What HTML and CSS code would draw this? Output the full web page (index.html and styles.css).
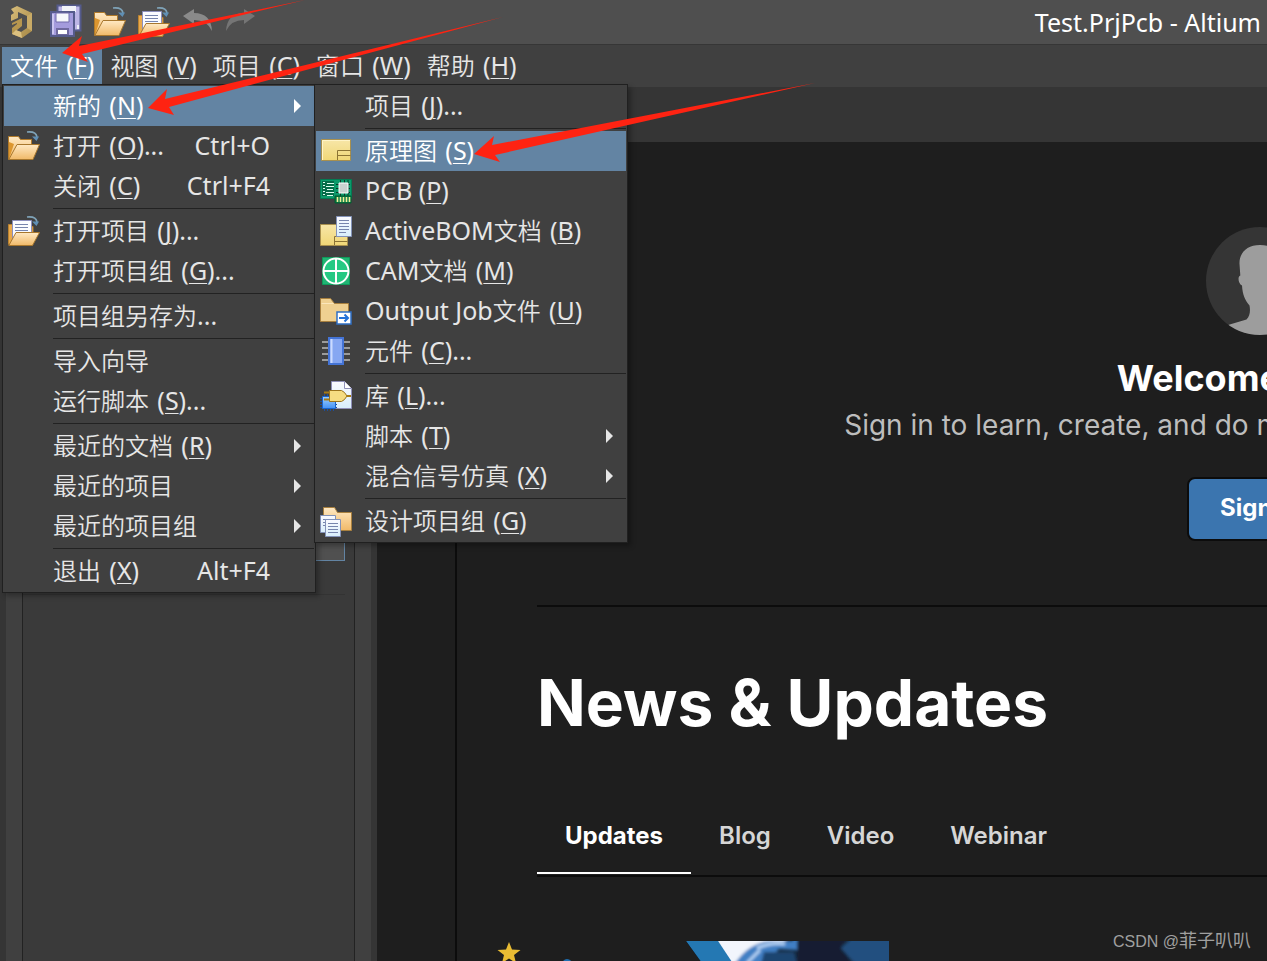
FILE: index.html
```html
<!DOCTYPE html>
<html lang="zh-CN">
<head>
<meta charset="utf-8">
<title>Test.PrjPcb - Altium</title>
<link rel="stylesheet" href="styles.css">
</head>
<body>
<svg class="defs" aria-hidden="true">
  <defs>
    <linearGradient id="tan" x1="0" y1="0" x2="0" y2="1"><stop offset="0" stop-color="#ffe9c4"/><stop offset="1" stop-color="#f0b968"/></linearGradient>
    <linearGradient id="yellow" x1="0" y1="0" x2="0" y2="1"><stop offset="0" stop-color="#f7e6a8"/><stop offset="1" stop-color="#f0d776"/></linearGradient>
    <linearGradient id="paper" x1="0" y1="0" x2="0" y2="1"><stop offset="0" stop-color="#fafaff"/><stop offset="1" stop-color="#d8eefb"/></linearGradient>
    <linearGradient id="gold" x1="0" y1="0" x2="1" y2="1"><stop offset="0" stop-color="#d8bd7a"/><stop offset="1" stop-color="#a58745"/></linearGradient>
    <linearGradient id="chip" x1="0" y1="0" x2="0" y2="1"><stop offset="0" stop-color="#9ed0ff"/><stop offset="1" stop-color="#4592f5"/></linearGradient>
    <symbol id="swoosh" viewBox="0 0 32 32">
      <path d="M19 2q9-1 10 5" fill="none" stroke="#7fa3b8" stroke-width="1.6"/>
      <path d="M24 6.500h7l-2.500 4.500z" fill="#5f8fb5"/>
    </symbol>
    <symbol id="folder-open" viewBox="0 0 32 32">
      <path d="M.500 29.500v-23h10l2 3h11v6" fill="url(#tan)" stroke="#b07a2a"/>
      <path d="M1 29V12l5 2z" fill="#dc962f"/>
      <path d="M.800 29.500 9 14.500h22.500L25 29.500z" fill="url(#tan)" stroke="#a8772d"/>
      <use href="#swoosh"/>
    </symbol>
    <symbol id="folder-doc" viewBox="0 0 32 32">
      <path d="M.500 29.500V9.500h6v6h17v-4h1.500v6" fill="#e9a94c" stroke="#b98230"/>
      <path d="M4.500 25V5.500h19V22z" fill="#fbfcff" stroke="#8d90bd"/>
      <path d="M7 9.500h13M7 12.500h13M7 15.500h13" stroke="#7785ad"/>
      <path d="M.800 30.500 8 17.500h23.500l-7 13z" fill="url(#tan)" stroke="#a8772d"/>
      <use href="#swoosh"/>
    </symbol>
  </defs>
</svg>

<header class="titlebar">
  <nav class="toolbar" aria-label="工具栏">
    <button class="tool" aria-label="Altium"><svg viewBox="0 0 32 32"><path d="M5 3 11 0l15 7v18l-10 7-10-4v-5l9 3 6-4V10l-9-4v6l-7 3V9l3-2z" fill="url(#gold)"/><path d="M6 17l10-5v8l-10 8v-6l5-4v-1l-5 2z" fill="#b6964f"/><path d="M21 10l5-3v18l-5-3z" fill="#c9ab66"/><path d="M6 28l4-4 5 2 1 6z" fill="#dcc180"/></svg></button>
    <button class="tool" aria-label="全部保存"><svg viewBox="0 0 32 32"><path d="M7.500-.500h23v25h-23z" fill="#bdb6e6" stroke="#555b8c" stroke-width="2"/><path d="M12 0h14v6H12z" fill="#f1f3f8"/><path d="M27 19h2v4h-2z" fill="#eceef7"/><path d="M1 6h23v24H1z" fill="#a49bdd" stroke="#555b8c" stroke-width="2"/><path d="M6 7h13v9H6z" fill="#f6f7fb" stroke="#716aab"/><path d="M3 8v20" stroke="#cbc5f0" stroke-width="2"/><path d="M6 22h13v7H6z" fill="#6f699f"/><path d="M8 24h9v4H8z" fill="#fff"/></svg></button>
    <button class="tool" aria-label="打开"><svg viewBox="0 0 32 32"><use href="#folder-open"/></svg></button>
    <button class="tool" aria-label="打开项目"><svg viewBox="0 0 32 32"><use href="#folder-doc"/></svg></button>
    <button class="tool" aria-label="撤销"><svg viewBox="0 0 32 32"><path d="M1 10 12 3v4q17 0 18 18-5-11-18-11v4z" fill="#8a8a8a"/></svg></button>
    <button class="tool" aria-label="重做"><svg viewBox="0 0 32 32"><path d="M29 10 18 3v4Q1 7 0 25q5-11 18-11v4z" fill="#757575"/></svg></button>
  </nav>
  <span class="window-title">Test.PrjPcb - Altium</span>
</header>

<nav class="menubar" aria-label="菜单">
  <button class="menu-head is-open">文件 <span class="lat key">(<u>F</u>)</span></button>
  <button class="menu-head">视图 <span class="lat key">(<u>V</u>)</span></button>
  <button class="menu-head">项目 <span class="lat key">(<u>C</u>)</span></button>
  <button class="menu-head">窗口 <span class="lat key">(<u>W</u>)</span></button>
  <button class="menu-head">帮助 <span class="lat key">(<u>H</u>)</span></button>

  <div class="menu menu-file">
    <button class="item is-active"><span class="icon"></span><span>新的 <span class="lat key">(<u>N</u>)</span></span><i class="more"></i></button>
    <button class="item"><svg class="icon" viewBox="0 0 32 32"><use href="#folder-open"/></svg><span>打开 <span class="lat key">(<u>O</u>)...</span></span><span class="lat shortcut">Ctrl+O</span></button>
    <button class="item"><span class="icon"></span><span>关闭 <span class="lat key">(<u>C</u>)</span></span><span class="lat shortcut">Ctrl+F4</span></button>
    <hr class="sep">
    <button class="item"><svg class="icon" viewBox="0 0 32 32"><use href="#folder-doc"/></svg><span>打开项目 <span class="lat key">(<u>J</u>)...</span></span></button>
    <button class="item"><span class="icon"></span><span>打开项目组 <span class="lat key">(<u>G</u>)...</span></span></button>
    <hr class="sep">
    <button class="item"><span class="icon"></span><span>项目组另存为<span class="lat">...</span></span></button>
    <hr class="sep">
    <button class="item"><span class="icon"></span><span>导入向导</span></button>
    <button class="item"><span class="icon"></span><span>运行脚本 <span class="lat key">(<u>S</u>)...</span></span></button>
    <hr class="sep">
    <button class="item"><span class="icon"></span><span>最近的文档 <span class="lat key">(<u>R</u>)</span></span><i class="more"></i></button>
    <button class="item"><span class="icon"></span><span>最近的项目</span><i class="more"></i></button>
    <button class="item"><span class="icon"></span><span>最近的项目组</span><i class="more"></i></button>
    <hr class="sep">
    <button class="item"><span class="icon"></span><span>退出 <span class="lat key">(<u>X</u>)</span></span><span class="lat shortcut">Alt+F4</span></button>
  </div>

  <div class="menu menu-new">
    <button class="item"><span class="icon"></span><span>项目 <span class="lat key">(<u>J</u>)...</span></span></button>
    <hr class="sep">
    <button class="item is-active"><svg class="icon" viewBox="0 0 32 32"><path d="M1.500 4.500h29v21h-29z" fill="url(#yellow)" stroke="#a8904e"/><path d="M2.500 25V5.500H30" fill="none" stroke="#fff4c8"/><path d="M17.500 25v-9.500h13M17.500 20.500h13" fill="none" stroke="#8c7434"/></svg><span>原理图 <span class="lat key">(<u>S</u>)</span></span></button>
    <button class="item"><svg class="icon" viewBox="0 0 32 32"><path d="M.500 4.500h31v19h-31z" fill="#0b9a6b" stroke="#047a52"/><path d="M2 6h12v15H2z" fill="#056b49"/><path d="M3 7.500h2M3 10.500h2M3 13.500h2M3 16.500h2M3 19.500h2M7 8.500h7M6 11.500h8M7 14.500h6M6 17.500h8M7 20.500h6" stroke="#d9fff0"/><path d="M16 9.500h14M16 13.500h14M16 17.500h14M20.500 5v17M24.500 5v17M28 5v17" stroke="#0a3829"/><path d="M19 8h9v10h-9z" fill="#c9d2d0" stroke="#fff"/><path d="M15 21h16v7H15z" fill="#057a42" stroke="#025b30"/><path d="M17.500 22v5M20.500 22v5M23.500 22v5M26.500 22v5M29.500 22v5" stroke="#f0ef9a" stroke-width="1.600"/></svg><span class="lat">PCB (<u>P</u>)</span></button>
    <button class="item"><svg class="icon" viewBox="0 0 32 32"><path d="M.500 9.500h27v21H.500z" fill="url(#yellow)" stroke="#a8904e"/><path d="M14.500 30v-8.500h13M14.500 26.500h13" fill="none" stroke="#8c7434"/><path d="M16.500 1.500h15v20h-15z" fill="url(#paper)" stroke="#8392b8"/><path d="M19 5.500h10M19 8.500h10M19 11.500h10M19 14.500h10M19 17.500h7" stroke="#7785ad"/></svg><span><span class="lat">ActiveBOM</span>文档 <span class="lat key">(<u>B</u>)</span></span></button>
    <button class="item"><svg class="icon" viewBox="0 0 32 32"><path d="M2.500 2.500h27v27h-27z" fill="#1fb573" stroke="#0f9a5b"/><circle cx="16" cy="16" r="12.500" fill="#25c983" stroke="#fff" stroke-width="2"/><path d="M16 3v26M3 16h26" stroke="#fff" stroke-width="2"/></svg><span><span class="lat">CAM</span>文档 <span class="lat key">(<u>M</u>)</span></span></button>
    <button class="item"><svg class="icon" viewBox="0 0 32 32"><path d="M.500 26.500V3.500h10l4 5h14v18z" fill="#efd091" stroke="#a8803f"/><path d="M1.500 8.500h12" stroke="#fbe6bb"/><path d="M17 17h14v12H17z" fill="#fff" stroke="#2f6fc4" stroke-width="1.500"/><path d="M19 23h9M24.500 19.500 28 23l-3.500 3.500" fill="none" stroke="#2472d8" stroke-width="2"/></svg><span><span class="lat">Output Job</span>文件 <span class="lat key">(<u>U</u>)</span></span></button>
    <button class="item"><svg class="icon" viewBox="0 0 32 32"><path d="M2 7h28M2 13h28M2 19h28M2 25h28" stroke="#9b9b9b" stroke-width="2"/><path d="M9 3h14v26H9z" fill="#86a7f2" stroke="#4474d6" stroke-width="2"/><path d="M11.500 4v24" stroke="#cbdaff" stroke-width="2"/></svg><span>元件 <span class="lat key">(<u>C</u>)...</span></span></button>
    <hr class="sep">
    <button class="item"><svg class="icon" viewBox="0 0 32 32"><path d="M11.500 1.500h13l7 7v20h-20z" fill="url(#paper)" stroke="#8f8fb8"/><path d="M24.500 1.500v7h7" fill="#fff" stroke="#8f8fb8"/><path d="M4.500 14v17M7.500 14v17M10.500 14v17M13.500 14v17M0 18.500h17M0 21.500h17M0 24.500h17M0 27.500h17" stroke="#1d4f9c"/><path d="M2.500 16.500h13v12h-13z" fill="url(#chip)" stroke="#1764cf"/><path d="M4 12.500h6M4 19.500h6M26 16h5" stroke="#a87b14" stroke-width="2"/><path d="M9.500 10.500h12q3 1 5.500 5.500-2.500 4.500-5.500 5.500h-12z" fill="#f5dc82" stroke="#9b741c"/></svg><span>库 <span class="lat key">(<u>L</u>)...</span></span></button>
    <button class="item"><span class="icon"></span><span>脚本 <span class="lat key">(<u>T</u>)</span></span><i class="more"></i></button>
    <button class="item"><span class="icon"></span><span>混合信号仿真 <span class="lat key">(<u>X</u>)</span></span><i class="more"></i></button>
    <hr class="sep">
    <button class="item"><svg class="icon" viewBox="0 0 32 32"><path d="M3.500 25.500v-23h11l3 5h14v18z" fill="url(#tan)" stroke="#a8803f"/><path d="M.500 10.500h15v17h-15z" fill="url(#paper)" stroke="#8392b8"/><path d="M3 14.500h4M3 17.500h4M3 20.500h4" stroke="#7785ad"/><path d="M5.500 14.500h15v17h-15z" fill="url(#paper)" stroke="#8392b8"/><path d="M8 18.500h10M8 21.500h10M8 24.500h10M8 27.500h10" stroke="#7785ad"/></svg><span>设计项目组 <span class="lat key">(<u>G</u>)</span></span></button>
  </div>
</nav>

<div class="tabstrip"></div>

<div class="workspace">
  <aside class="panel">
    <div class="panel-body">
      <input class="panel-input" type="text" aria-label="搜索">
      <hr class="panel-line">
    </div>
  </aside>
  <div class="rail"></div>
  <main class="page">
    <section class="hero">
      <svg class="avatar" viewBox="0 0 108 108"><defs><clipPath id="round"><circle cx="54" cy="54" r="54"/></clipPath></defs><circle cx="54" cy="54" r="54" fill="#353535"/><path clip-path="url(#round)" d="M54 18c-14 0-21 9-20.500 19l.800 11.500c-3 1-2 8 1.700 10 .500 9 3 15 7.500 20 1 5 .500 11-3 14L22 98v12h64V98l-18.500-5.500c-3.500-3-4-9-3-14 4.500-5 7-11 7.500-20 3.700-2 4.700-9 1.700-10L74.500 37C75 27 68 18 54 18z" fill="#9d9d9d"/></svg>
      <h1 class="welcome">Welcome</h1>
      <p class="lead">Sign in to learn, create, and do m</p>
      <button class="signin">Sign</button>
    </section>
    <section class="news">
      <h2 class="news-title">News &amp; Updates</h2>
      <nav class="tabs">
        <a class="tab is-current" href="#updates">Updates</a>
        <a class="tab" href="#blog">Blog</a>
        <a class="tab" href="#video">Video</a>
        <a class="tab" href="#webinar">Webinar</a>
      </nav>
    </section>
    <section class="cards">
      <svg class="card-art" viewBox="0 0 400 160" aria-hidden="true">
        <defs>
          <filter id="soft"><feGaussianBlur stdDeviation="1.500"/></filter>
          <clipPath id="photo"><path d="M197 0h203v160H310z"/></clipPath>
        </defs>
        <path d="M20 1l3 7.500 8.500.500-6.500 5 2 8-7-4.500-7 4.500 2-8-6.500-5 8.500-.500z" fill="#e8bb33"/>
        <path d="M71 25q3-7 7-7 4 0 8 7z" fill="#1f6fb2"/>
        <g clip-path="url(#photo)">
          <path d="M190 0h210v160H190z" fill="#14293f"/>
          <g filter="url(#soft)">
            <path d="M225-4h78l-20 10-30 24h-10z" fill="#f2f5fc"/>
            <path d="M245 24q14-22 36-24h24l-4-4h10l-3 13-18-1-20 20z" fill="#3f7fc4"/>
            <path d="M268 7q16-6 28-4M258 22l13-13" stroke="#b8d4f4" stroke-width="3" fill="none"/>
            <path d="M275 11h30l5 20h-40z" fill="#1d4470"/>
            <path d="M308-4h52l-8 10 20 26h-64z" fill="#121f30"/>
            <path d="M352 7l12-11h40v34h-32z" fill="#23507f"/>
          </g>
          <path d="M197 0h32l20 30h-30z" fill="#2478b3"/>
        </g>
      </svg>
    </section>
  </main>
</div>

<svg class="arrows" width="820" height="170" viewBox="0 0 820 170" aria-hidden="true">
  <g fill="#fe2312">
    <path d="M62 53 82 36 79 46 305 0 82 54 88 62z"/>
    <path d="M148 108 167 89 165 99 503 17 169 107 174 115z"/>
    <path d="M474 154 494 136 492 145 815 83 495 155 500 162z"/>
  </g>
</svg>
<div class="watermark"><span class="watermark-site">CSDN @</span>菲子叭叭</div>
</body>
</html>
```
FILE: styles.css
```css
* { box-sizing: border-box; }

body {
  margin: 0;
  position: relative;
  height: 100vh;
  overflow: hidden;
  display: flex;
  flex-direction: column;
  background: #1e1e1e;
  color: #e6e6e6;
  font-family: "Noto Sans", "Noto Sans CJK SC", sans-serif;
}

button {
  margin: 0;
  border: 0;
  background: none;
  color: inherit;
  font: inherit;
  white-space: nowrap;
}

.defs { position: absolute; width: 0; height: 0; }

/* Title bar */
.titlebar {
  flex: none;
  display: flex;
  align-items: center;
  justify-content: space-between;
  height: 45px;
  padding: 0 6px;
  background: #4f4f4f;
  border-bottom: 1px solid #363636;
}
.toolbar { display: flex; gap: 12px; }
.tool { width: 32px; height: 34px; padding: 0; }
.tool svg { display: block; width: 32px; height: 32px; overflow: visible; }
.window-title { color: #fff; font-size: 25px; line-height: 44px; }

/* Menu bar and drop-downs */
.menubar {
  flex: none;
  position: relative;
  display: flex;
  height: 42px;
  padding: 2px 2px 3px;
  background: #404040;
  font-family: "Noto Sans CJK SC", sans-serif;
  font-size: 24px;
  font-weight: 350;
}
.menu-head { height: 37px; padding: 0 8px 2px; line-height: 35px; }
.menu-head.is-open { background: #6384a3; color: #fff; }
.lat { font-family: "Noto Sans", sans-serif; font-size: 25px; font-weight: 400; }
.key { margin-left: 3px; }
u { text-decoration-thickness: 1px; text-underline-offset: 3px; }

.menu {
  position: absolute;
  top: 39px;
  z-index: 1;
  width: 314px;
  padding: 1px;
  background: #404040;
  border: 1px solid #202020;
  box-shadow: 3px 3px 5px rgba(0, 0, 0, 0.3);
}
.menu-file { left: 2px; }
.menu-new { left: 314px; }
.item {
  display: flex;
  align-items: center;
  width: 100%;
  height: 40px;
  padding: 0 0 0 4px;
  line-height: 38px;
  text-align: left;
}
.item > span { padding-bottom: 2px; }
.item.is-active { background: #6384a3; color: #fff; }
.icon { flex: none; width: 32px; height: 32px; margin-right: 13px; }
.shortcut { margin-left: auto; padding-right: 44px; }
.more {
  margin-left: auto;
  margin-right: 13px;
  border-left: 7px solid currentColor;
  border-top: 7px solid transparent;
  border-bottom: 7px solid transparent;
}
.sep {
  height: 1px;
  margin: 2px 0 2px 49px;
  border: 0;
  background: #222;
}

.tabstrip { flex: none; height: 55px; background: #353535; }

/* Workspace */
.workspace { flex: 1; display: flex; min-height: 0; }
.panel {
  flex: none;
  width: 377px;
  padding: 0 16px;
  background: #404040;
  border: solid #353535;
  border-width: 0 6px;
}
.panel-body {
  height: 100%;
  padding: 383px 9px 0 0;
  background: #3a3a3a;
  border: solid #222;
  border-width: 0 1px;
}
.panel-input {
  display: block;
  width: 100%;
  height: 36px;
  background: #505050;
  border: 1px solid #6384a3;
  color: #fff;
}
.panel-line { height: 1px; margin: 33px 0 0; border: 0; background: #333; }
.rail { flex: none; width: 80px; border-right: 2px solid #0c0c0c; }

.page {
  flex: 1;
  min-width: 0;
  overflow: hidden;
  padding-left: 80px;
  font-family: Inter, sans-serif;
}
.hero {
  display: flex;
  flex-direction: column;
  align-items: flex-end;
  padding: 85px 0 64px;
  border-bottom: 2px solid #0c0c0c;
}
.avatar { width: 108px; height: 108px; margin-right: -47px; }
.welcome {
  margin: 19px -14px 0 0;
  color: #fff;
  font-size: 36px;
  font-weight: 700;
  line-height: 48px;
}
.lead {
  margin: 5px -14px 0 0;
  color: #bdbdbd;
  font-size: 28px;
  line-height: 36px;
  white-space: nowrap;
}
.signin {
  width: 144px;
  height: 64px;
  margin: 34px -64px 0 0;
  padding: 0 0 4px 31px;
  background: #3b75af;
  border: 2px solid #0c0c0c;
  border-radius: 8px;
  color: #fff;
  font-size: 24px;
  font-weight: 700;
  text-align: left;
}
.news { padding-top: 56px; }
.news-title {
  margin: 0;
  color: #fff;
  font-size: 64px;
  font-weight: 700;
  line-height: 80px;
}
.tabs {
  display: flex;
  height: 134px;
  align-items: flex-end;
  padding-bottom: 1px;
  border-bottom: 2px solid #0c0c0c;
}
.tab {
  padding: 0 28px 20px;
  border-bottom: 2px solid transparent;
  color: #d6d6d6;
  font-size: 24px;
  font-weight: 600;
  line-height: 32px;
  text-decoration: none;
}
.tab.is-current { color: #fff; border-color: #fff; font-weight: 700; }
.cards { padding-top: 64px; }
.card-art { display: block; width: 400px; height: 160px; margin-left: -48px; }

/* Annotations */
.arrows { position: absolute; left: 0; top: 0; z-index: 2; pointer-events: none; }
.watermark {
  position: absolute;
  right: 16px;
  bottom: 7px;
  color: #a0a0a0;
  font: 400 18px/24px "Liberation Sans", "Noto Sans CJK SC", sans-serif;
}
.watermark-site { font-size: 16px; }
```
